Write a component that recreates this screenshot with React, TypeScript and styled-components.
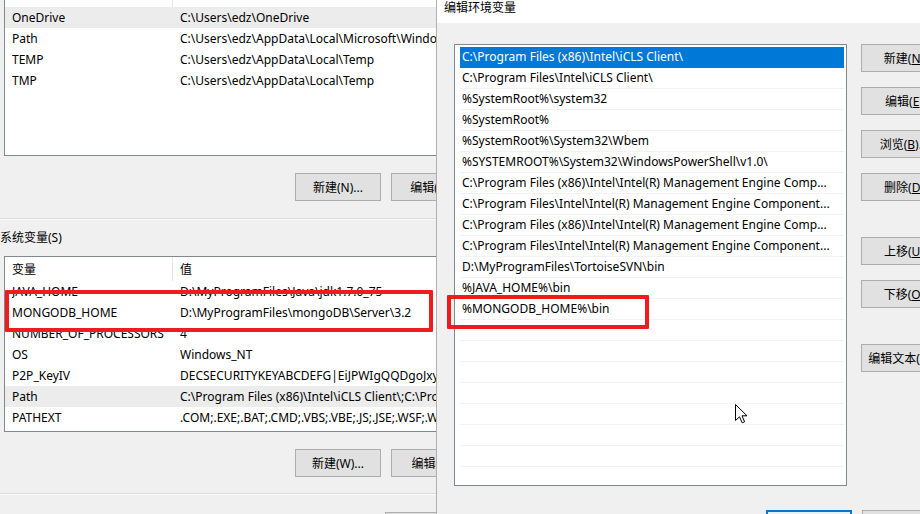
import React from "react";
import styled, { createGlobalStyle } from "styled-components";

const GlobalStyle = createGlobalStyle`
  html, body { margin: 0; padding: 0; background: #f0f0f0; overflow: hidden; }
  body {
    font-family: "Noto Sans", "Noto Sans CJK SC", sans-serif;
    font-size: 12px;
    color: #000;
  }
  * { box-sizing: border-box; }
`;

const Screen = styled.div`
  display: flex;
  width: 920px;
  height: 514px;
  overflow: hidden;
`;

const EnvPanel = styled.div`
  position: relative;
  width: 436px;
  flex: none;
  overflow: hidden;
`;

const EnvColumn = styled.div`
  width: 640px;
  display: flex;
  flex-direction: column;
`;

const VarList = styled.div<{ $top: number; $height: number }>`
  margin-top: ${(p) => p.$top}px;
  margin-left: 4px;
  width: 600px;
  height: ${(p) => p.$height}px;
  background: #fff;
  border: 1px solid #828790;
  overflow: hidden;
  flex: none;
`;

const VarHeader = styled.div<{ $h: number }>`
  display: grid;
  grid-template-columns: 168px 1fr;
  height: ${(p) => p.$h}px;
  align-items: center;
`;

const HeaderCell = styled.div<{ $sep?: boolean }>`
  height: 100%;
  display: flex;
  align-items: center;
  padding-left: 7px;
  border-right: ${(p) => (p.$sep ? "1px solid #e5e5e5" : "none")};
`;

const VarRow = styled.div<{ $hl?: boolean }>`
  display: grid;
  grid-template-columns: 168px 1fr;
  height: 21px;
  align-items: center;
  padding-left: 7px;
  background: ${(p) => (p.$hl ? "#ececec" : "transparent")};
  white-space: nowrap;
`;

const Cell = styled.span`
  overflow: hidden;
  white-space: nowrap;
`;

const ButtonRow = styled.div<{ $top: number; $left: number }>`
  display: flex;
  gap: 10px;
  margin-top: ${(p) => p.$top}px;
  padding-left: ${(p) => p.$left}px;
  flex: none;
`;

const WinButton = styled.button<{ $default?: boolean }>`
  width: 86px;
  height: 28px;
  flex: none;
  padding: 0;
  background: ${(p) => (p.$default ? "#e5f1fb" : "#e1e1e1")};
  border: ${(p) => (p.$default ? "2px solid #0078d7" : "1px solid #adadad")};
  font: inherit;
  color: #000;
  white-space: nowrap;
`;

const Key = styled.span`
  text-decoration: underline;
`;

const Divider = styled.div<{ $top: number }>`
  margin-top: ${(p) => p.$top}px;
  border-top: 1px solid #dcdcdc;
  border-bottom: 1px solid #fafafa;
  flex: none;
`;

const GroupLabel = styled.div`
  margin-top: 10px;
  line-height: 16px;
  height: 16px;
  flex: none;
`;

const Annotation = styled.div<{ $x: number; $y: number; $w: number; $h: number }>`
  position: absolute;
  left: ${(p) => p.$x}px;
  top: ${(p) => p.$y}px;
  width: ${(p) => p.$w}px;
  height: ${(p) => p.$h}px;
  border: 4px solid #ee1c1c;
  border-radius: 1px;
  pointer-events: none;
`;

const Dialog = styled.div`
  position: relative;
  flex: 1;
  display: flex;
  flex-direction: column;
  background: #f0f0f0;
  border-left: 1px solid #b0b0b0;
`;

const TitleBar = styled.div`
  height: 23px;
  background: #fff;
  padding-left: 7px;
  line-height: 16px;
  flex: none;
`;

const DialogBody = styled.div`
  display: flex;
  padding: 21px 0 0 17px;
  gap: 14px;
`;

const PathList = styled.div`
  width: 393px;
  height: 442px;
  flex: none;
  background: #fff;
  border: 1px solid #828790;
  padding: 2px 2px 0 5px;
  overflow: hidden;
`;

const PathRow = styled.div<{ $selected?: boolean }>`
  height: 21px;
  line-height: 20px;
  padding-left: 2px;
  border-bottom: 1px solid ${(p) => (p.$selected ? "#0078d7" : "#f2f2f2")};
  background: ${(p) => (p.$selected ? "#0078d7" : "transparent")};
  color: ${(p) => (p.$selected ? "#fff" : "#000")};
  white-space: nowrap;
  overflow: hidden;
`;

const ButtonColumn = styled.div`
  display: flex;
  flex-direction: column;
  gap: 36px;
  flex: none;
`;

const ButtonGroup = styled.div`
  display: flex;
  flex-direction: column;
  gap: 15px;
`;

const Footer = styled.div`
  display: flex;
  gap: 10px;
  padding: 24px 0 0 329px;
`;

const Cursor = styled.svg`
  position: absolute;
  left: 298px;
  top: 404px;
`;

const userVars: [string, string, boolean?][] = [
  ["OneDrive", "C:\\Users\\edz\\OneDrive", true],
  ["Path", "C:\\Users\\edz\\AppData\\Local\\Microsoft\\WindowsApps"],
  ["TEMP", "C:\\Users\\edz\\AppData\\Local\\Temp"],
  ["TMP", "C:\\Users\\edz\\AppData\\Local\\Temp"],
];

const sysVars: [string, string, boolean?][] = [
  ["JAVA_HOME", "D:\\MyProgramFiles\\Java\\jdk1.7.0_75"],
  ["MONGODB_HOME", "D:\\MyProgramFiles\\mongoDB\\Server\\3.2"],
  ["NUMBER_OF_PROCESSORS", "4"],
  ["OS", "Windows_NT"],
  ["P2P_KeyIV", "DECSECURITYKEYABCDEFG|EiJPWIgQQDgoJxyz"],
  ["Path", "C:\\Program Files (x86)\\Intel\\iCLS Client\\;C:\\Program Files\\Intel\\iCLS Client\\", true],
  ["PATHEXT", ".COM;.EXE;.BAT;.CMD;.VBS;.VBE;.JS;.JSE;.WSF;.WSH;.MSC"],
];

const paths = [
  "C:\\Program Files (x86)\\Intel\\iCLS Client\\",
  "C:\\Program Files\\Intel\\iCLS Client\\",
  "%SystemRoot%\\system32",
  "%SystemRoot%",
  "%SystemRoot%\\System32\\Wbem",
  "%SYSTEMROOT%\\System32\\WindowsPowerShell\\v1.0\\",
  "C:\\Program Files (x86)\\Intel\\Intel(R) Management Engine Comp...",
  "C:\\Program Files\\Intel\\Intel(R) Management Engine Component...",
  "C:\\Program Files (x86)\\Intel\\Intel(R) Management Engine Comp...",
  "C:\\Program Files\\Intel\\Intel(R) Management Engine Component...",
  "D:\\MyProgramFiles\\TortoiseSVN\\bin",
  "%JAVA_HOME%\\bin",
  "%MONGODB_HOME%\\bin",
];

const Mn = ({ label, k, rest = ")" }: { label: string; k: string; rest?: string }) => (
  <>
    {label}(<Key>{k}</Key>{rest}
  </>
);

export default function App() {
  const rows = [...paths, ...Array(9).fill("")];
  return (
    <>
      <GlobalStyle />
      <Screen>
        <EnvPanel>
          <EnvColumn>
            <VarList $top={-25} $height={181}>
              <VarHeader $h={31}>
                <HeaderCell $sep>变量</HeaderCell>
                <HeaderCell>值</HeaderCell>
              </VarHeader>
              {userVars.map(([n, v, hl]) => (
                <VarRow key={n} $hl={hl}>
                  <Cell>{n}</Cell>
                  <Cell>{v}</Cell>
                </VarRow>
              ))}
            </VarList>
            <ButtonRow $top={17} $left={295}>
              <WinButton>新建(N)...</WinButton>
              <WinButton>编辑(E)...</WinButton>
            </ButtonRow>
            <Divider $top={17} />
            <GroupLabel>系统变量(S)</GroupLabel>
            <VarList $top={10} $height={176}>
              <VarHeader $h={24}>
                <HeaderCell $sep>变量</HeaderCell>
                <HeaderCell>值</HeaderCell>
              </VarHeader>
              {sysVars.map(([n, v, hl]) => (
                <VarRow key={n} $hl={hl}>
                  <Cell>{n}</Cell>
                  <Cell>{v}</Cell>
                </VarRow>
              ))}
            </VarList>
            <ButtonRow $top={17} $left={295}>
              <WinButton>新建(W)...</WinButton>
              <WinButton>编辑(I)...</WinButton>
            </ButtonRow>
            <Divider $top={16} />
            <ButtonRow $top={17} $left={385}>
              <WinButton>确定</WinButton>
            </ButtonRow>
          </EnvColumn>
          <Annotation $x={5} $y={290} $w={428} $h={42} />
        </EnvPanel>

        <Dialog>
          <TitleBar>编辑环境变量</TitleBar>
          <DialogBody>
            <PathList>
              {rows.map((p, i) => (
                <PathRow key={i} $selected={i === 0}>
                  {p || "\u00a0"}
                </PathRow>
              ))}
            </PathList>
            <ButtonColumn>
              <ButtonGroup>
                <WinButton><Mn label="新建" k="N" /></WinButton>
                <WinButton><Mn label="编辑" k="E" /></WinButton>
                <WinButton><Mn label="浏览" k="B" />...</WinButton>
                <WinButton><Mn label="删除" k="D" /></WinButton>
              </ButtonGroup>
              <ButtonGroup>
                <WinButton><Mn label="上移" k="U" /></WinButton>
                <WinButton><Mn label="下移" k="O" /></WinButton>
              </ButtonGroup>
              <ButtonGroup>
                <WinButton><Mn label="编辑文本" k="T" />...</WinButton>
              </ButtonGroup>
            </ButtonColumn>
          </DialogBody>
          <Footer>
            <WinButton $default>确定</WinButton>
            <WinButton>取消</WinButton>
          </Footer>
          <Annotation $x={10} $y={295} $w={202} $h={34} />
          <Cursor width="13" height="20" viewBox="0 0 13 20">
            <path
              d="M0.5 0.5 L0.5 16.5 L4.5 12.8 L7.2 18.8 L9.6 17.8 L7 11.8 L12 11.8 Z"
              fill="#fff"
              stroke="#000"
              strokeWidth="1"
              strokeLinejoin="miter"
            />
          </Cursor>
        </Dialog>
      </Screen>
    </>
  );
}
